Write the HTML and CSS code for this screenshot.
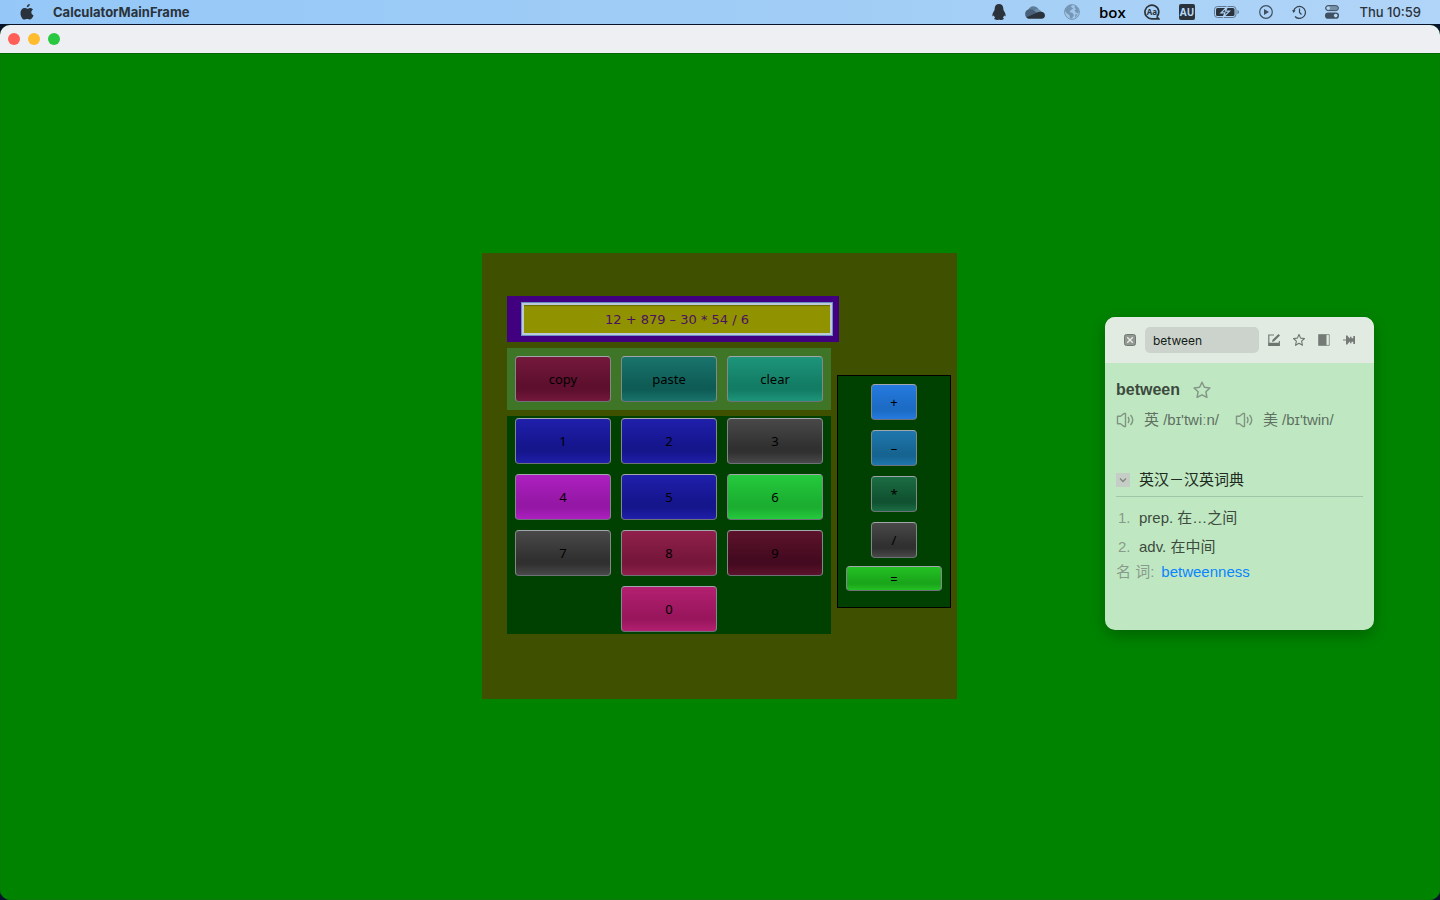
FILE: index.html
```html
<!DOCTYPE html>
<html lang="en">
<head>
<meta charset="utf-8">
<title>CalculatorMainFrame</title>
<link rel="stylesheet" href="styles.css">
</head>
<body>
<header class="menubar">
  <svg class="apple" width="14" height="16" viewBox="0 0 14 16" fill="#2a323b"><path d="M9.800 0c.1 1.700-1.300 3.300-3 3.300C6.600 1.700 8.100.200 9.800 0zM10 3.900c1.200 0 2.400.7 3 1.600-2.500 1.500-2 4.800.5 5.800-.6 1.700-1.900 4.300-3.400 4.300-1.100 0-1.500-.7-2.900-.7s-1.800.7-2.900.7C2.500 15.700.5 12.300.5 9.200c0-3.200 1.900-5.200 4-5.200 1.200 0 2 .7 2.900.7.800 0 1.500-.8 2.600-.8z"/></svg>
  <strong class="app-name">CalculatorMainFrame</strong>
  <div class="status">
    <svg width="14" height="16" viewBox="0 0 14 16" fill="#2a323b"><path d="M7 0C4.200 0 2.600 2 2.700 4.700c0 1-.4 1.800-1 2.900C.7 9.200.1 11 .5 12c.3.500 1-.2 1.400-.8.1.9.500 1.700 1.200 2.300-1 .5-1 1.200-.5 1.800.7.800 3.300.9 4.400.1 1.100.8 3.700.7 4.400-.1.500-.6.500-1.300-.5-1.800.7-.6 1.100-1.400 1.200-2.300.4.600 1.100 1.300 1.400.8.4-1-.2-2.800-1.200-4.400-.6-1.100-1-1.900-1-2.900C11.400 2 9.800 0 7 0z"/></svg>
    <svg width="20" height="14" viewBox="0 0 20 14"><path fill="#5d7c98" d="M3 5.500C4 1 10-.8 13.500 4l-5 4z"/><path fill="#486079" d="M3.500 4.600c2-.8 4-.3 5.300.6L14 8.500 2.500 13C-.8 11.500-.8 5.500 3.500 4.600z"/><path fill="#6d8da9" d="M9 5.400c1.500-2 5.800-2.300 7.200 1.200L20 10l-6-1.300z"/><path fill="#2a323b" d="M1.500 12.300 10 8.600c2.200-1 3.500-2.200 6.500-1.800 4.600.6 4.600 7 0 7H4.500c-1.300 0-2.200-.5-3-1.500z"/></svg>
    <svg width="16" height="16" viewBox="0 0 16 16"><circle cx="8" cy="8" r="7.400" fill="#a0c7e9" stroke="#7596b4"/><path fill="#7596b4" d="M1 5.500 3 2.600 6 1l2 .3L7 3l2.500 1.500L7 6 5.500 8l3 1 1.500 2-2 3.500-2-.3-.5-3L3 9.500 1 7zM11 1.500l3 3 1 3-1 2-2-1-1.500-2L12 5l-1.500-1zM11.500 10l2 .5-1.500 2.500-1 .5z"/></svg>
    <span class="box-mark">box</span>
    <svg width="16" height="16" viewBox="0 0 16 16"><path d="M12.800 12.800A6.900 6.900 0 1 0 8 14.900h6.800l-2-2.100" fill="none" stroke="#2a323b" stroke-width="1.700"/><text class="glyph-small" x="8" y="11" text-anchor="middle">Aa</text></svg>
    <svg width="16" height="16" viewBox="0 0 16 16"><rect width="16" height="16" rx="2" fill="#2a323b"/><text class="glyph-au" x="8" y="12" text-anchor="middle">AU</text></svg>
    <svg width="26" height="12" viewBox="0 0 26 12"><rect x=".5" y=".5" width="21.500" height="11" rx="3" fill="none" stroke="#62798f"/><rect x="2" y="2" width="18.500" height="8" rx="1.500" fill="#2a323b"/><path d="M13.500.5 7 6.800h4L9 11.500l6.500-6.300h-4z" fill="#2a323b" stroke="#abd1f5" stroke-width="1.200"/><path d="M23.500 4v4q1.500-.5 1.500-2t-1.500-2" fill="#62798f"/></svg>
    <svg width="14" height="14" viewBox="0 0 14 14"><circle cx="7" cy="7" r="6.300" fill="none" stroke="#3e5062" stroke-width="1.200"/><path d="M5 4v6l5-3z" fill="#3e5062"/></svg>
    <svg width="14" height="14" viewBox="0 0 14 14" fill="none" stroke="#35424f" stroke-width="1.200"><path d="M1.600 6A6 6 0 1 1 3 11.500"/><path d="M7.500 3.500V7.500l2 2"/><path d="M0 5.300h3.600L1.700 8z" fill="#35424f" stroke="none"/></svg>
    <svg width="14" height="14" viewBox="0 0 14 14"><rect x=".6" y=".6" width="12.800" height="5" rx="2.500" fill="#7890a7" stroke="#3e5062"/><circle cx="3.300" cy="3.100" r="1.700" fill="#b6d8f8"/><rect y="7.500" width="14" height="6.300" rx="3.100" fill="#3e5062"/><circle cx="10.700" cy="10.600" r="1.800" fill="#b6d8f8"/></svg>
    <time class="clock">Thu 10:59</time>
  </div>
</header>
<div class="window">
  <div class="titlebar">
    <button class="light red" aria-label="Close"></button>
    <button class="light yellow" aria-label="Minimize"></button>
    <button class="light green" aria-label="Zoom"></button>
  </div>
  <main class="frame">
    <section class="calculator">
      <div class="display"><input class="readout" aria-label="Expression" value="12 + 879 – 30 * 54 / 6"></div>
      <div class="left">
        <div class="edit-keys">
          <button class="key copy">copy</button><button class="key paste">paste</button><button class="key clear">clear</button>
        </div>
        <div class="digits">
          <button class="key blue">1</button><button class="key blue">2</button><button class="key gray">3</button>
          <button class="key purple">4</button><button class="key blue">5</button><button class="key lime">6</button>
          <button class="key gray">7</button><button class="key crimson">8</button><button class="key maroon">9</button>
          <button class="key pink zero">0</button>
        </div>
      </div>
      <div class="operators">
        <div class="operator-list">
          <button class="key op plus">+</button><button class="key op minus">–</button><button class="key op times">*</button><button class="key op gray">/</button>
        </div>
        <button class="key equals">=</button>
      </div>
    </section>
  </main>
</div>
<aside class="dictionary">
  <div class="search">
    <button class="tool close" aria-label="Close dictionary"><svg width="12" height="12" viewBox="0 0 12 12"><rect x=".5" y=".5" width="11" height="11" rx="2" fill="#919892" stroke="#737974"/><path d="M3.200 3.200l5.600 5.600m0-5.600L3.200 8.800" stroke="#e9eeea" stroke-width="1.300"/></svg></button>
    <input class="query" aria-label="Search" value="between">
    <div class="tools">
      <button class="tool" aria-label="Edit"><svg width="12" height="12" viewBox="0 0 12 12"><path d="M6 1H.8v10.500h10.500V7" fill="none" stroke="#747b76" stroke-width="1.200"/><path d="M.5 8.800h11v3H.5zM4 8l.5-2.300L10.500 0 12 1.500 6.200 7.300z" fill="#6e756f"/></svg></button>
      <button class="tool" aria-label="Favourite"><svg width="12" height="12" viewBox="0 0 12 12"><path d="M6 .5l1.600 3.600 3.900.4-2.900 2.700.9 4.100L6 9.300l-3.500 2 .9-4.100L.5 4.500l3.900-.4z" fill="none" stroke="#6e756f" stroke-width="1.100" stroke-linejoin="round"/></svg></button>
      <button class="tool" aria-label="Sidebar"><svg width="12" height="12" viewBox="0 0 12 12"><path d="M.7.600h10.600v10.800H.7z" fill="none" stroke="#7d847f" stroke-width=".8"/><path d="M.5.500h8v11h-8z" fill="#747b76"/></svg></button>
      <button class="tool" aria-label="Pin"><svg width="12" height="12" viewBox="0 0 12 12" fill="#747b76"><path d="M0 5.500h3v1H0zM3 1.500h1.300L6.300 4v4L4.300 10.500H3zM6 4.200h5v3.600H6zM7 2.800h1.500v6.400H7zM10.300 2H12v8h-1.700z"/></svg></button>
    </div>
  </div>
  <article class="entry">
    <div class="heading"><h1>between</h1><button class="tool" aria-label="Save word"><svg width="18" height="18" viewBox="0 0 18 18"><path d="M9 1.200l2.400 5 5.500.8-4 3.800 1 5.600L9 13.800l-4.900 2.600 1-5.600-4-3.800 5.500-.8z" fill="none" stroke="#849786" stroke-width="1.500" stroke-linejoin="round"/></svg></button></div>
    <div class="sounds">
      <button class="sound"><svg width="18" height="16" viewBox="0 0 18 16" fill="none" stroke="#809482" stroke-width="1.400" stroke-linejoin="round"><path d="M1.500 4.300h3L8 1.500h1.500v13H8l-3.500-2.800h-3zM12 5q2 3 0 6M14.500 3q4.500 5 0 10"/></svg><span>英 /bɪ'twiːn/</span></button>
      <button class="sound"><svg width="18" height="16" viewBox="0 0 18 16" fill="none" stroke="#809482" stroke-width="1.400" stroke-linejoin="round"><path d="M1.500 4.300h3L8 1.500h1.500v13H8l-3.500-2.800h-3zM12 5q2 3 0 6M14.500 3q4.500 5 0 10"/></svg><span>美 /bɪ'twin/</span></button>
    </div>
    <div class="source"><button class="toggle" aria-label="Collapse"><svg width="14" height="14" viewBox="0 0 14 14"><path d="M4 5.500l3 3 3-3" fill="none" stroke="#828582" stroke-width="1.400"/></svg></button><h2>英汉－汉英词典</h2></div>
    <ol class="senses">
      <li><span class="number">1.</span>prep. 在…之间</li>
      <li><span class="number">2.</span>adv. 在中间</li>
    </ol>
    <p class="forms"><span>名 词:</span><a href="#betweenness">betweenness</a></p>
  </article>
</aside>
</body>
</html>
```
FILE: styles.css
```css
* { box-sizing: border-box; }
body {
  margin: 0;
  height: 100vh;
  display: flex;
  flex-direction: column;
  position: relative;
  background: #07142b;
  font-family: Inter, "Noto Sans CJK SC", sans-serif;
  font-size: 13px;
}
button, input { font: inherit; margin: 0; padding: 0; border: 0; background: none; }
svg { display: block; flex: none; }

.menubar {
  height: 24px;
  flex: none;
  display: flex;
  align-items: center;
  padding: 0 19px 0 20px;
  background: linear-gradient(90deg, #95c8f8, #a1cdf5 60%, #b1d5f8);
  color: #2a323b;
}
.app-name { margin-left: 19px; font-weight: 700; }
.status { margin-left: auto; display: flex; align-items: center; gap: 19px; }
.box-mark { width: 26px; font: 600 15px/20px "Open Sans", sans-serif; color: #000; }
.glyph-small { font: 700 8px "Noto Sans", sans-serif; fill: #2a323b; }
.glyph-au { font: 700 10px "Noto Sans", sans-serif; fill: #b5d8f5; }
.clock { width: 63px; font-weight: 500; text-align: right; white-space: nowrap; }

.window {
  flex: 1;
  margin-top: 1px;
  display: flex;
  flex-direction: column;
  border-radius: 10px;
  overflow: hidden;
  background: #008400;
}
.titlebar {
  height: 28px;
  flex: none;
  display: flex;
  align-items: center;
  gap: 8px;
  padding-left: 8px;
  background: #eeeff2;
}
.light { width: 12px; height: 12px; border-radius: 50%; }
.red { background: #ff5f57; }
.yellow { background: #febc2e; }
.green { background: #28c840; }
.frame {
  flex: 1;
  display: flex;
  align-items: center;
  justify-content: center;
  padding: 0 1px 1px 0;
  border: 1px solid #0a7a0a;
  border-top-color: #046604;
}

.calculator {
  display: grid;
  grid-template-columns: 324px 114px;
  gap: 6px;
  padding: 43px 6px 65px 25px;
  background: #3f5000;
  font-family: "Noto Sans", sans-serif;
}
.display {
  grid-column: 1 / -1;
  justify-self: start;
  width: 332px;
  padding: 6px 6px 6px 14px;
  background: #400080;
}
.readout {
  display: block;
  width: 100%;
  height: 34px;
  border: 1px solid #6c8fc8;
  box-shadow: inset 0 0 0 2px #bacbd5, inset 0 3px 1px #666b00;
  background: #909200;
  color: #4b1060;
  text-align: center;
  font: 13px "DejaVu Sans", sans-serif;
}
.left { display: grid; gap: 6px; }
.edit-keys, .digits {
  display: grid;
  grid-template-columns: repeat(3, 96px);
  gap: 10px;
}
.edit-keys { padding: 8px; background: #3f7526; }
.digits { padding: 2px 8px; background: #004000; }
.zero { grid-column: 2; }
.key {
  height: 46px;
  border: 1px solid #84888c;
  border-top-color: #a1a7ac;
  border-bottom-color: #6c7278;
  border-radius: 4px;
  background: linear-gradient(var(--top), var(--low) 65%, var(--low) 75%, var(--top));
  color: #000;
  text-align: center;
}
.copy { --top: #75193c; --low: #5d0f2d; }
.paste { --top: #19746c; --low: #0e5c55; }
.clear { --top: #1d957a; --low: #127c64; }
.blue { --top: #1f1fab; --low: #15158c; }
.gray { --top: #494949; --low: #303030; }
.purple { --top: #ad20c0; --low: #9417a5; }
.lime { --top: #25ca3d; --low: #1bae31; }
.crimson { --top: #90204b; --low: #76163a; }
.maroon { --top: #5c132b; --low: #440a1f; }
.pink { --top: #b32070; --low: #99165d; }
.operators {
  align-self: start;
  margin-top: 27px;
  padding: 8px 8px 16px;
  display: flex;
  flex-direction: column;
  align-items: center;
  gap: 8px;
  border: 1px solid #000;
  background: #004000;
}
.operator-list { display: grid; gap: 10px; }
.op { width: 46px; height: 36px; }
.plus { --top: #267bdf; --low: #1c6bc5; }
.minus { --top: #1f77ad; --low: #166491; }
.times { --top: #1b6d43; --low: #105231; }
.equals { width: 96px; height: 25px; line-height: 16px; --top: #24c124; --low: #1aa61a; }

.dictionary {
  position: absolute;
  top: 317px;
  right: 66px;
  width: 269px;
  overflow: hidden;
  border-radius: 10px;
  background: #bfe8c2;
  box-shadow: 0 5px 16px #0004;
  font-family: "Liberation Sans", "Noto Sans CJK SC", sans-serif;
  font-size: 15px;
  line-height: 24px;
  color: #3d4a3e;
}
.search {
  height: 46px;
  display: flex;
  align-items: center;
  gap: 9px;
  padding: 0 19px;
  background: #e1ebe2;
}
.query {
  flex: 1;
  min-width: 0;
  height: 26px;
  padding: 0 8px;
  border-radius: 5px;
  background: #ccd3cd;
  color: #141b15;
  font: 12px Inter, sans-serif;
}
.tools { display: flex; gap: 13px; }
.entry { padding: 14px 11px 46px; }
.heading { display: flex; align-items: center; gap: 13px; height: 26px; }
h1, h2 { margin: 0; }
h1 { font-size: 16px; }
h2 { font-size: 15px; font-weight: 400; color: #202a21; }
.sounds { display: flex; gap: 16px; margin-top: 5px; }
.sound { display: flex; align-items: center; gap: 10px; color: #607062; white-space: nowrap; }
.source {
  display: flex;
  align-items: center;
  gap: 9px;
  height: 33px;
  margin-top: 32px;
  border-bottom: 1px solid #9fc6a5;
}
.toggle { width: 14px; height: 14px; background: #c5cdc6; }
.senses { list-style: none; margin: 9px 0 0; padding: 0 0 0 2px; display: grid; gap: 5px; }
.number { display: inline-block; width: 21px; color: #899a8b; }
.forms { margin: 1px 0 0; color: #899a8b; display: flex; gap: 7px; }
.forms a { color: #0a84ff; text-decoration: none; }
```
